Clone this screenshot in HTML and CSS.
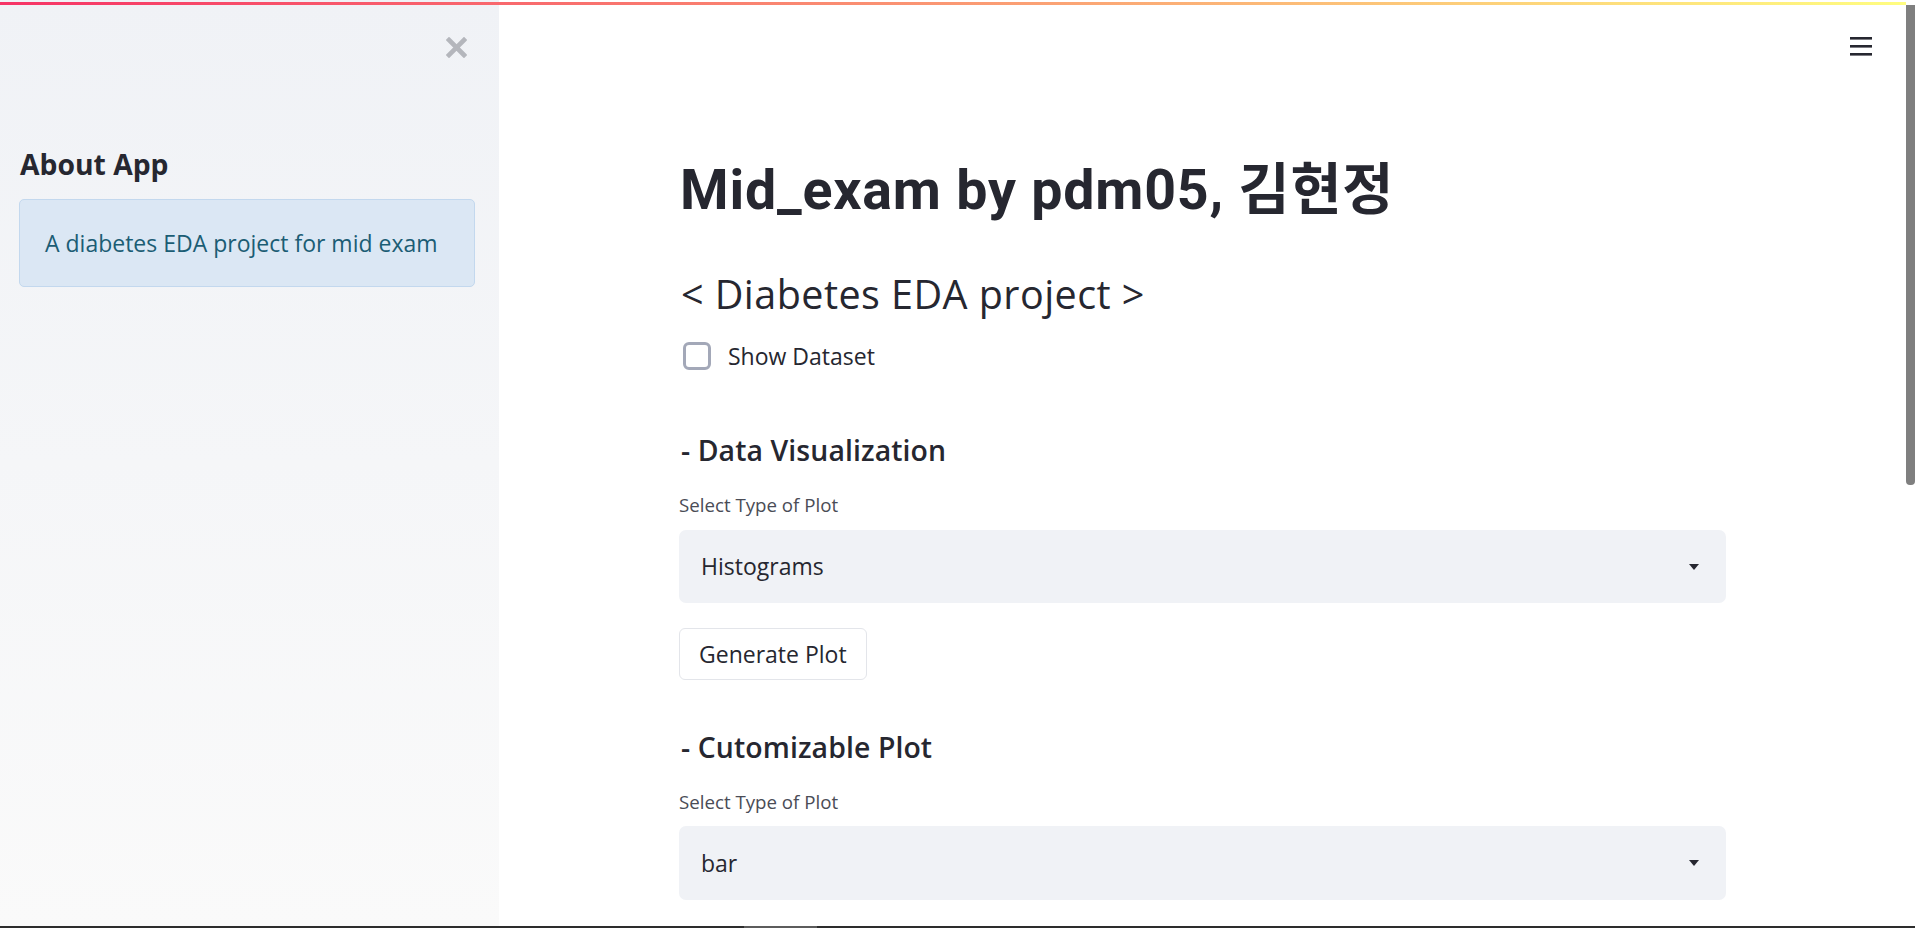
FILE: index.html
```html
<!DOCTYPE html>
<html lang="ko">
<head>
<meta charset="utf-8">
<title>Mid_exam by pdm05</title>
<link rel="stylesheet" href="styles.css">
</head>
<body>
<div class="decoration"></div>
<div class="app">
  <div class="frame">
    <aside class="sidebar">
      <div class="sidebar-top">
        <button class="close-btn" aria-label="Close sidebar">
          <svg width="21" height="21" viewBox="0 0 21 21"><path d="M3 3 L18 18 M18 3 L3 18" stroke="#b4b6bc" stroke-width="4.6" stroke-linecap="square"/></svg>
        </button>
      </div>
      <h2 class="side-title">About App</h2>
      <div class="info-box">A diabetes EDA project for mid exam</div>
    </aside>
    <section class="main">
      <header class="main-header">
        <button class="menu-btn" aria-label="Menu">
          <svg width="22" height="19" viewBox="0 0 22 19"><rect x="0" y="0" width="22" height="2.6" fill="#262730"/><rect x="0" y="8" width="22" height="2.6" fill="#262730"/><rect x="0" y="16" width="22" height="2.6" fill="#262730"/></svg>
        </button>
      </header>
      <div class="block-container">
        <h1 class="title">Mid_exam by pdm05, 김현정</h1>
        <h3 class="subheader">&lt; Diabetes EDA project &gt;</h3>
        <label class="checkbox"><span class="check-box"></span><span class="check-label">Show Dataset</span></label>
        <h4 class="section-title first">- Data Visualization</h4>
        <div class="field-label">Select Type of Plot</div>
        <div class="select"><span class="select-value">Histograms</span><span class="caret"></span></div>
        <button class="btn">Generate Plot</button>
        <h4 class="section-title second">- Cutomizable Plot</h4>
        <div class="field-label">Select Type of Plot</div>
        <div class="select select-last"><span class="select-value">bar</span><span class="caret"></span></div>
      </div>
    </section>
    <div class="vscroll"><div class="vthumb"></div></div>
  </div>
  <div class="hscroll"><div class="hthumb"></div></div>
</div>
</body>
</html>
```
FILE: styles.css
```css
* { box-sizing: border-box; }
html, body { margin: 0; padding: 0; height: 100%; }
body {
  font-family: "Open Sans", "Noto Sans CJK KR", sans-serif;
  color: #262730;
  background: #ffffff;
  overflow: hidden;
}
.decoration {
  position: fixed;
  top: 2px;
  left: 0;
  width: 1906px;
  height: 3px;
  background: linear-gradient(90deg, #f63366, #fffd80);
  z-index: 10;
}
.app { display: flex; flex-direction: column; height: 100vh; }
.frame { display: flex; height: calc(100vh - 2px); overflow: hidden; }

/* sidebar */
.sidebar {
  width: 499px;
  flex: none;
  background: linear-gradient(180deg, #f0f2f6 0%, #fafafa 100%);
  padding: 0 24px 0 19px;
  display: flex;
  flex-direction: column;
}
.sidebar-top { display: flex; justify-content: flex-end; padding-top: 37px; padding-right: 8px; }
.close-btn { border: 0; background: none; padding: 0; width: 21px; height: 21px; display: block; }
.close-btn svg { display: block; }
.side-title {
  margin: 88px 0 0 0;
  font-size: 28.3px;
  line-height: 36px;
  font-weight: 700;
  color: #262730;
  padding-left: 1px;
}
.info-box {
  margin-top: 17px;
  background: #dbe7f4;
  border: 1px solid #c3d8ee;
  border-radius: 5px;
  padding: 27.5px 20px 27.5px 25px;
  font-size: 23px;
  line-height: 31px;
  color: #1b5d74;
}

/* main */
.main { flex: 1; display: flex; flex-direction: column; min-width: 0; }
.main-header { display: flex; justify-content: flex-end; padding: 37px 34px 0 0; }
.menu-btn { border: 0; background: none; padding: 0; display: block; }
.menu-btn svg { display: block; }
.block-container {
  width: 1047px;
  margin: 0 auto;
  padding-top: 102px;
  display: flex;
  flex-direction: column;
  align-items: flex-start;
}
.title {
  margin: 0;
  font-family: "Roboto", "Noto Sans CJK KR", sans-serif;
  font-size: 55.5px;
  line-height: 66px;
  font-weight: 700;
  letter-spacing: 0.8px;
  color: #262730;
  margin-left: 1px;
}
.subheader {
  margin: 46px 0 0 2px;
  font-size: 39.5px;
  line-height: 48px;
  font-weight: 400;
  letter-spacing: 0.45px;
  color: #262730;
}
.checkbox { margin-top: 24px; display: flex; align-items: center; height: 28px; }
.check-box {
  width: 28px;
  height: 28px;
  margin-left: 4px;
  border: 3px solid #a3a8b8;
  border-radius: 6px;
  background: #ffffff;
}
.check-label { margin-left: 17px; font-size: 23px; line-height: 28px; color: #262730; }
.section-title {
  margin: 62px 0 0 2px;
  font-size: 28.4px;
  line-height: 36px;
  font-weight: 600;
  letter-spacing: 0.1px;
  color: #262730;
}
.section-title.second { margin-top: 49px; }
.field-label {
  margin-top: 25px;
  font-size: 18.7px;
  line-height: 24px;
  color: #4a4c56;
}
.select {
  margin-top: 13px;
  width: 100%;
  height: 73px;
  background: #f0f2f6;
  border-radius: 7px;
  display: flex;
  align-items: center;
  justify-content: space-between;
  padding: 0 27px 0 22px;
}
.select-last { margin-top: 12px; height: 74px; }
.select-value { font-size: 23px; line-height: 31px; color: #262730; }
.caret {
  width: 0;
  height: 0;
  border-left: 5.5px solid transparent;
  border-right: 5.5px solid transparent;
  border-top: 6px solid #262730;
}
.btn {
  margin-top: 25px;
  height: 52px;
  padding: 0 19px;
  background: #ffffff;
  border: 1px solid #e3e5ea;
  border-radius: 6px;
  font-family: "Open Sans", sans-serif;
  font-size: 23px;
  line-height: 50px;
  color: #262730;
}

/* scrollbars */
.vscroll { width: 9px; flex: none; background: #ffffff; }
.vthumb { margin-top: 5px; height: 480px; background: #7f7f7f; border-radius: 0 0 4px 4px; }
.hscroll { height: 2px; background: #2d2d2d; flex: none; }
.hthumb { margin-left: 744px; width: 73px; height: 2px; background: #5c5c5c; }
```
